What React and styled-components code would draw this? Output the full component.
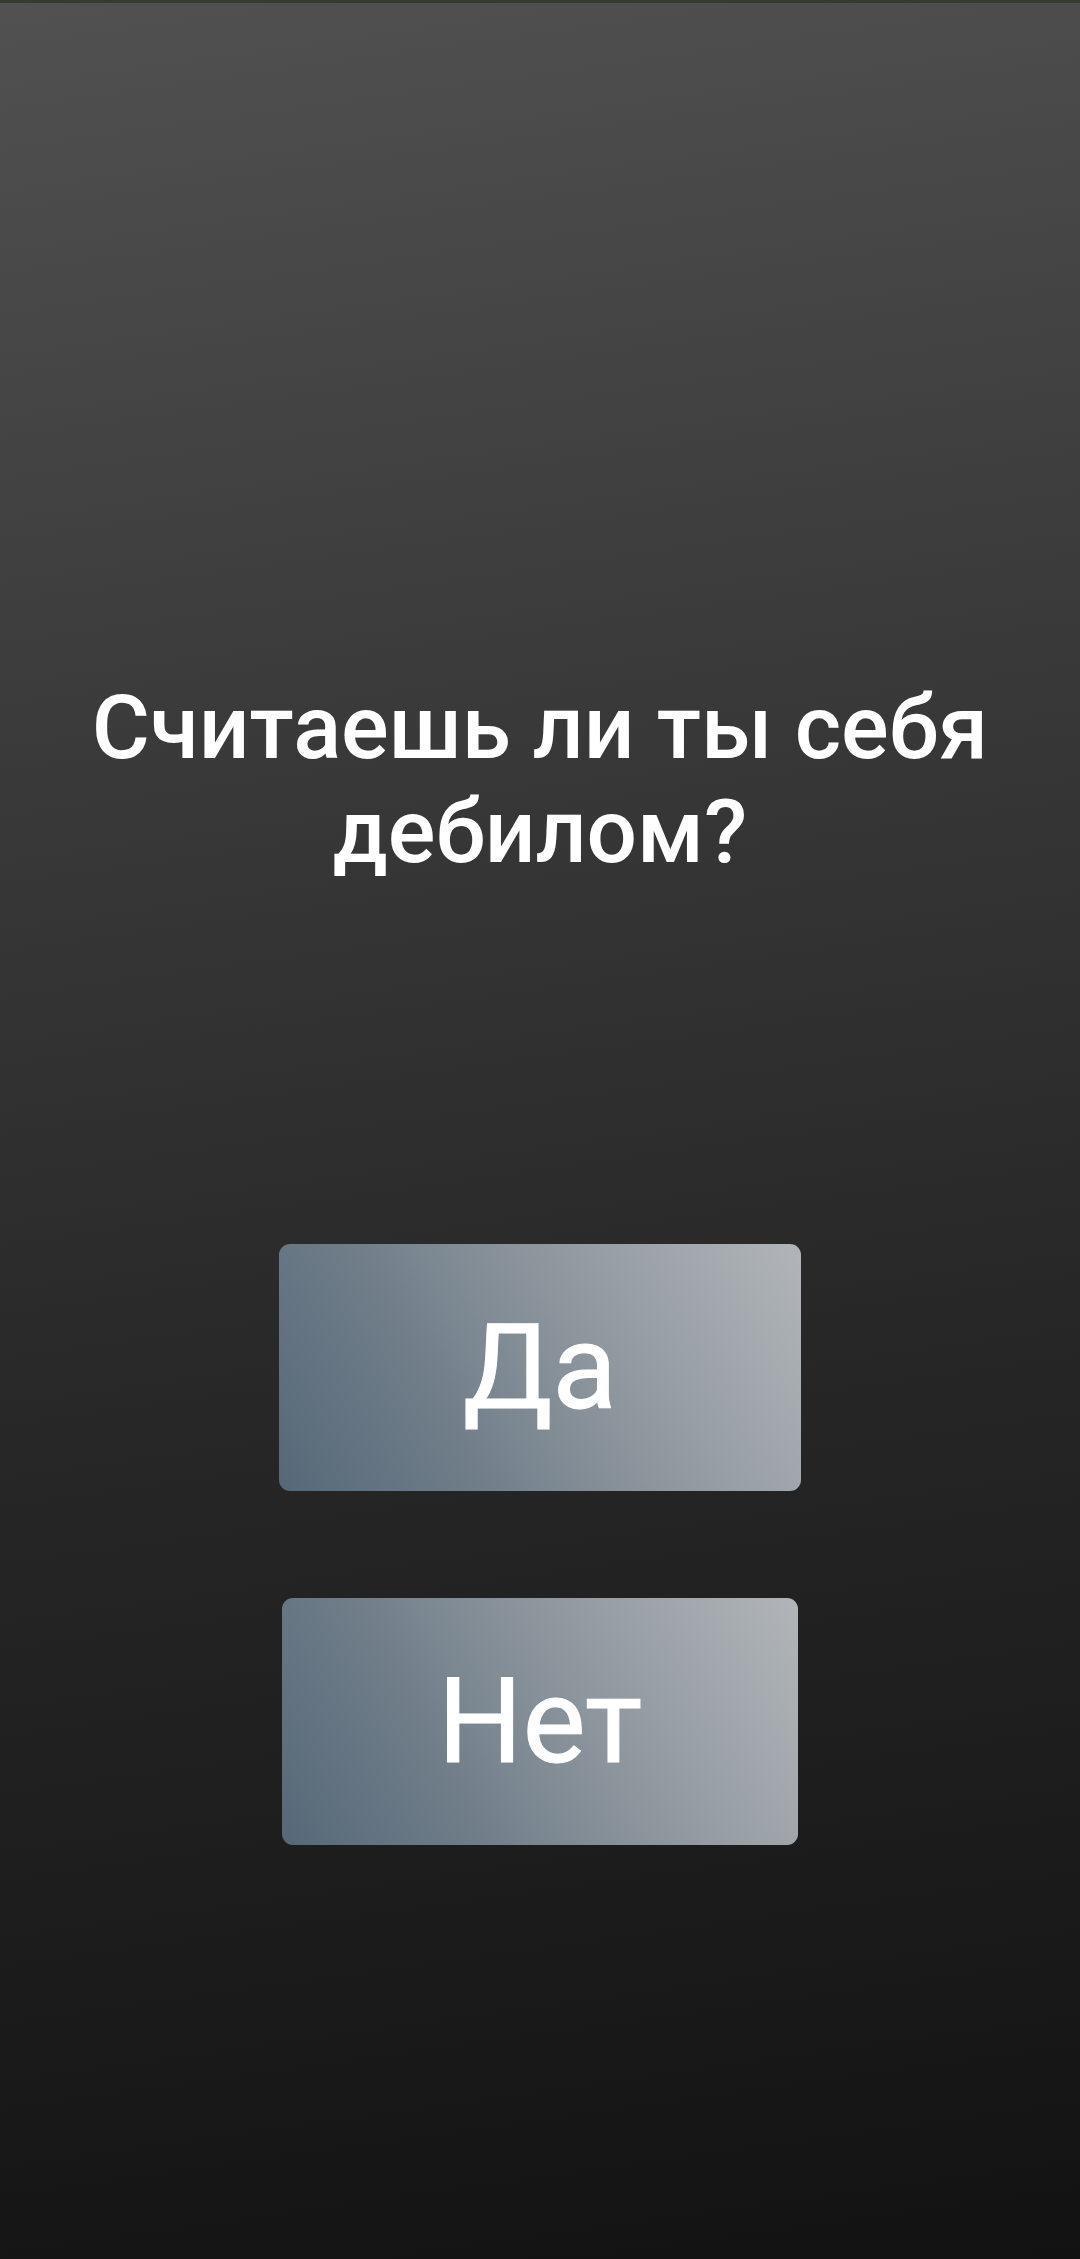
import React from 'react'
import styled, { createGlobalStyle } from 'styled-components'

const GlobalStyle = createGlobalStyle`
    html, body {
        margin: 0;
        padding: 0;
        background: #1a1a1a;
    }
    * {
        box-sizing: border-box;
    }
`

const Screen = styled.div`
    width: 1080px;
    height: 2259px;
    display: flex;
    flex-direction: column;
    align-items: center;
    background: linear-gradient(172deg, #515151 0%, #3b3b3b 30%, #272727 60%, #121212 100%);
    font-family: Roboto, "Noto Sans", sans-serif;
    color: #ffffff;
    overflow: hidden;
`

const TopEdge = styled.div`
    align-self: stretch;
    height: 3px;
    background: #373a31;
`

const Question = styled.h1`
    margin: 673px 0 0;
    padding: 0 60px;
    font-size: 89px;
    font-weight: 500;
    line-height: 104px;
    text-align: center;
`

const Answers = styled.div`
    margin-top: 360px;
    display: flex;
    flex-direction: column;
    align-items: center;
    gap: 107px;
`

const AnswerButton = styled.button`
    width: ${p => p.$width}px;
    height: 247px;
    display: flex;
    align-items: center;
    justify-content: center;
    border: none;
    border-radius: 11px;
    background: linear-gradient(62deg, #566878 0%, #6f7d89 30%, #8f979e 60%, #b1b5b9 100%);
    color: #ffffff;
    font-family: Roboto, "Noto Sans", sans-serif;
    font-size: 119px;
    font-weight: 400;
    -webkit-text-stroke: 1px #ffffff;
    line-height: 1;
    cursor: pointer;
`

export default function App() {
    return (
        <>
            <GlobalStyle />
            <Screen>
                <TopEdge />
                <Question>
                    Считаешь ли ты себя<br />дебилом?
                </Question>
                <Answers>
                    <AnswerButton $width={522}>Да</AnswerButton>
                    <AnswerButton $width={516}>Нет</AnswerButton>
                </Answers>
            </Screen>
        </>
    )
}
